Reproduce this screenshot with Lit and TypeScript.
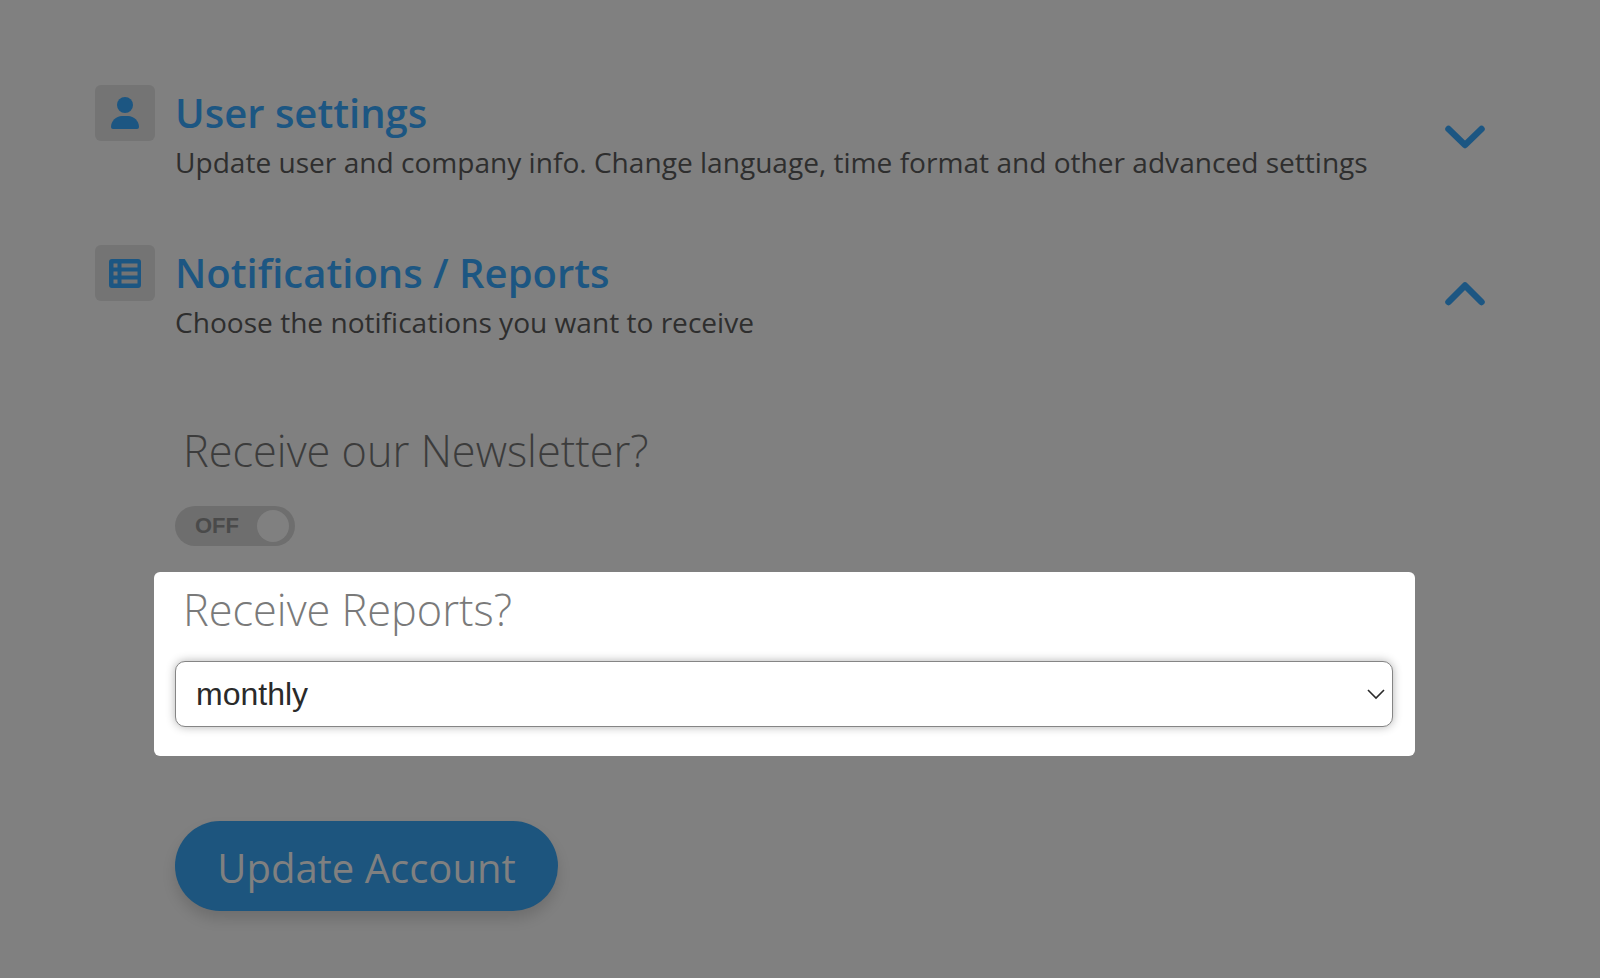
import { LitElement, html, css, svg } from "lit";
import { customElement } from "lit/decorators.js";

@customElement("app-root")
export class AppRoot extends LitElement {
  static styles = css`
    :host {
      display: block;
      height: 978px;
      overflow: hidden;
      background: #808080;
      font-family: "Open Sans", sans-serif;
    }
    .page {
      display: flex;
      flex-direction: column;
      padding: 85px 0 0 95px;
      width: 1390px;
    }
    .row {
      display: flex;
      height: 160px;
    }
    .row.second {
      height: 177px;
    }
    .icon {
      width: 60px;
      height: 56px;
      flex: none;
      border-radius: 6px;
      background: #747474;
      display: flex;
      align-items: center;
      justify-content: center;
      margin-right: 20px;
    }
    .head {
      flex: 1;
      min-width: 0;
    }
    h2 {
      margin: 0;
      font-size: 40px;
      line-height: 56px;
      font-weight: 600;
      color: #1c5682;
    }
    p {
      margin: 0;
      font-size: 28.08px;
      line-height: 43px;
      color: #2e2e2e;
    }
    .chev {
      flex: none;
      margin-top: 40px;
      display: block;
    }
    .chev.up {
      margin-top: 37px;
    }
    .section {
      padding-left: 80px;
      display: flex;
      flex-direction: column;
      align-items: flex-start;
    }
    .label {
      font-size: 43.3px;
      font-weight: 300;
      line-height: 58px;
      padding-left: 8px;
      color: #3c3c3c;
    }
    .toggle {
      margin-top: 26px;
      width: 120px;
      height: 40px;
      border-radius: 20px;
      background: #6e6e6e;
      display: flex;
      align-items: center;
      justify-content: space-between;
      padding: 0 6px 0 20px;
      box-sizing: border-box;
    }
    .toggle span {
      font-family: "Liberation Sans", sans-serif;
      font-weight: 700;
      font-size: 22px;
      color: #4a4a4a;
    }
    .knob {
      width: 32px;
      height: 32px;
      border-radius: 50%;
      background: #808080;
    }
    .card {
      margin: 26px 0 0 -21px;
      width: 1261px;
      height: 184px;
      box-sizing: border-box;
      background: #fff;
      border-radius: 6px;
      padding: 0 22px 0 21px;
    }
    .card .label {
      color: #7a7a7a;
      line-height: 76px;
      height: 76px;
      margin-bottom: 13px;
    }
    .select {
      height: 66px;
      box-sizing: border-box;
      border: 1.5px solid #858585;
      border-radius: 10px;
      box-shadow: 0 0 10px rgba(0, 0, 0, 0.3);
      display: flex;
      align-items: center;
      justify-content: space-between;
      padding: 0 7px 0 20px;
      font-family: "Liberation Sans", Arial, sans-serif;
      font-size: 32px;
      color: #2a2a2a;
      background: #fff;
    }
    .button {
      margin-top: 65px;
      width: 383px;
      height: 90px;
      box-sizing: border-box;
      padding-top: 2px;
      border-radius: 45px;
      background: #1d557e;
      color: #808080;
      font-size: 40px;
      display: flex;
      align-items: center;
      justify-content: center;
      box-shadow: 0 8px 14px rgba(0, 0, 0, 0.14);
    }
  `;

  private chevron(up: boolean) {
    const d = up ? "M3.5 20 L20 3.5 L36.5 20" : "M3.5 4 L20 20 L36.5 4";
    return html`<svg class="chev ${up ? "up" : ""}" width="40" height="24" viewBox="0 0 40 24">
      ${svg`<path d=${d} fill="none" stroke="#1c5682" stroke-width="6.5" stroke-linecap="round" stroke-linejoin="round"></path>`}
    </svg>`;
  }

  render() {
    return html`
      <div class="page">
        <div class="row">
          <div class="icon">
            <svg width="28" height="32" viewBox="0 0 28 32">
              <circle cx="14" cy="8" r="8" fill="#1c5682"></circle>
              <path d="M0 30 C0 24 5 19 11 19 H17 C23 19 28 24 28 30 Q28 32 26 32 H2 Q0 32 0 30 Z" fill="#1c5682"></path>
            </svg>
          </div>
          <div class="head">
            <h2>User settings</h2>
            <p>Update user and company info. Change language, time format and other advanced settings</p>
          </div>
          ${this.chevron(false)}
        </div>
        <div class="row second">
          <div class="icon">
            <svg width="32" height="29" viewBox="0 0 32 29">
              <path fill-rule="evenodd" fill="#1c5682" d="M3 0 H29 Q32 0 32 3 V26 Q32 29 29 29 H3 Q0 29 0 26 V3 Q0 0 3 0 Z M4.5 4.5 V8.5 H8.5 V4.5 Z M12.5 4.5 V8.5 H28.5 V4.5 Z M4.5 12.5 V16.5 H8.5 V12.5 Z M12.5 12.5 V16.5 H28.5 V12.5 Z M4.5 20.5 V24.5 H8.5 V20.5 Z M12.5 20.5 V24.5 H28.5 V20.5 Z"></path>
            </svg>
          </div>
          <div class="head">
            <h2>Notifications / Reports</h2>
            <p>Choose the notifications you want to receive</p>
          </div>
          ${this.chevron(true)}
        </div>
        <div class="section">
          <div class="label">Receive our Newsletter?</div>
          <div class="toggle"><span>OFF</span><div class="knob"></div></div>
          <div class="card">
            <div class="label">Receive Reports?</div>
            <div class="select">
              <span>monthly</span>
              <svg width="18" height="11" viewBox="0 0 18 11">
                <path d="M1 1 L9 9 L17 1" fill="none" stroke="#2a2a2a" stroke-width="1.6"></path>
              </svg>
            </div>
          </div>
          <div class="button">Update Account</div>
        </div>
      </div>
    `;
  }
}
